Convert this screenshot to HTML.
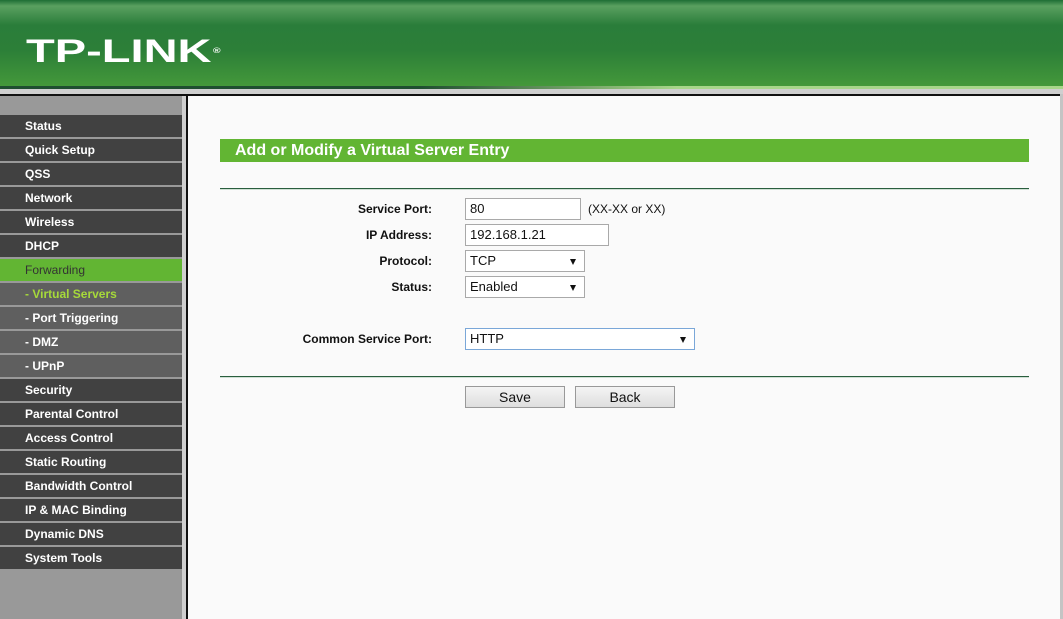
<!DOCTYPE html>
<html><head><meta charset="utf-8"><style>
*{margin:0;padding:0;box-sizing:border-box}
body{width:1063px;height:619px;overflow:hidden;background:#fafafa;font-family:"Liberation Sans",Arial,sans-serif;position:relative}
#hdr{position:absolute;left:0;top:0;width:1063px;height:86px;background:linear-gradient(#1e6e35 0px,#5aa060 6px,#2a7d3a 25px,#2c7f38 50px,#44983a 86px)}
#hdr .logo{position:absolute;left:26px;top:32px;color:#fff;font-weight:bold;font-size:32px;line-height:38px;transform:scaleX(1.47);transform-origin:left;white-space:nowrap}
#hdr .logo sup{font-size:7px;vertical-align:top;position:relative;top:1px;margin-left:1px}
#l1{position:absolute;left:0;top:86px;width:1063px;height:3px;background:#1f4e30}
#l1b{position:absolute;left:420px;top:86px;width:643px;height:3px;background:linear-gradient(90deg,#1f4e30,#a8d68a 40%,#a8d68a)}
#l2{position:absolute;left:0;top:89px;width:1063px;height:5px;background:#cfcfcf}
#l3{position:absolute;left:0;top:94px;width:1063px;height:2px;background:#111}
#side{position:absolute;left:0;top:96px;width:182px;height:523px;background:#999}
#sb{position:absolute;left:182px;top:96px;width:4px;height:523px;background:#cfcfcf}
#sl{position:absolute;left:186px;top:94px;width:2px;height:525px;background:#111}
#rb{position:absolute;left:1060px;top:94px;width:3px;height:525px;background:#c4c4c4}
.it{position:absolute;left:0;width:182px;height:22px;background:#414141;color:#fff;font-weight:bold;font-size:12px;line-height:23px;padding-left:25px}
.sub{background:#5f5f5f}
.fw{background:#62b533;color:#333;font-weight:normal}
.vs{color:#a6d93a}
#title{position:absolute;left:220px;top:139px;width:809px;height:23px;background:#62b533;color:#fff;font-weight:bold;font-size:16px;line-height:23px;padding-left:15px}
.hr{position:absolute;left:220px;width:809px;height:2px;background:#2a5e3e;border-bottom:1px solid #cfe0d4}
.lb{position:absolute;right:631px;font-weight:bold;font-size:12px;color:#111}
.in{position:absolute;left:465px;height:22px;border:1px solid #a9a9a9;background:#fff;font-size:13px;line-height:20px;padding-left:4px;color:#111}
.sel:after{content:"";position:absolute;right:8px;top:8px;border-left:3.5px solid transparent;border-right:3.5px solid transparent;border-top:6px solid #111}
.btn{position:absolute;top:386px;height:22px;width:100px;border:1px solid #999;background:linear-gradient(#f4f4f4,#dedede);font-size:14px;text-align:center;line-height:20px;color:#111}
</style></head><body>
<div id="hdr"><div class="logo">TP-LINK<sup>®</sup></div></div>
<div id="l1"></div><div id="l1b"></div><div id="l2"></div><div id="l3"></div>
<div id="side"></div><div id="sb"></div><div id="sl"></div><div id="rb"></div>
<div class="it" style="top:115px">Status</div>
<div class="it" style="top:139px">Quick Setup</div>
<div class="it" style="top:163px">QSS</div>
<div class="it" style="top:187px">Network</div>
<div class="it" style="top:211px">Wireless</div>
<div class="it" style="top:235px">DHCP</div>
<div class="it fw" style="top:259px">Forwarding</div>
<div class="it sub vs" style="top:283px">- Virtual Servers</div>
<div class="it sub" style="top:307px">- Port Triggering</div>
<div class="it sub" style="top:331px">- DMZ</div>
<div class="it sub" style="top:355px">- UPnP</div>
<div class="it" style="top:379px">Security</div>
<div class="it" style="top:403px">Parental Control</div>
<div class="it" style="top:427px">Access Control</div>
<div class="it" style="top:451px">Static Routing</div>
<div class="it" style="top:475px">Bandwidth Control</div>
<div class="it" style="top:499px">IP &amp; MAC Binding</div>
<div class="it" style="top:523px">Dynamic DNS</div>
<div class="it" style="top:547px">System Tools</div>

<div id="title">Add or Modify a Virtual Server Entry</div>
<div class="hr" style="top:188px"></div>
<div class="lb" style="top:202px">Service Port:</div>
<div class="lb" style="top:228px">IP Address:</div>
<div class="lb" style="top:254px">Protocol:</div>
<div class="lb" style="top:280px">Status:</div>
<div class="lb" style="top:332px">Common Service Port:</div>
<div class="in" style="top:198px;width:116px">80</div>
<div style="position:absolute;left:588px;top:202px;font-size:12px;color:#111">(XX-XX or XX)</div>
<div class="in" style="top:224px;width:144px">192.168.1.21</div>
<div class="in sel" style="top:250px;width:120px">TCP</div>
<div class="in sel" style="top:276px;width:120px">Enabled</div>
<div class="in sel" style="top:328px;width:230px;border-color:#7aa7d8">HTTP</div>
<div class="hr" style="top:376px"></div>
<div class="btn" style="left:465px">Save</div>
<div class="btn" style="left:575px">Back</div>
</body></html>
